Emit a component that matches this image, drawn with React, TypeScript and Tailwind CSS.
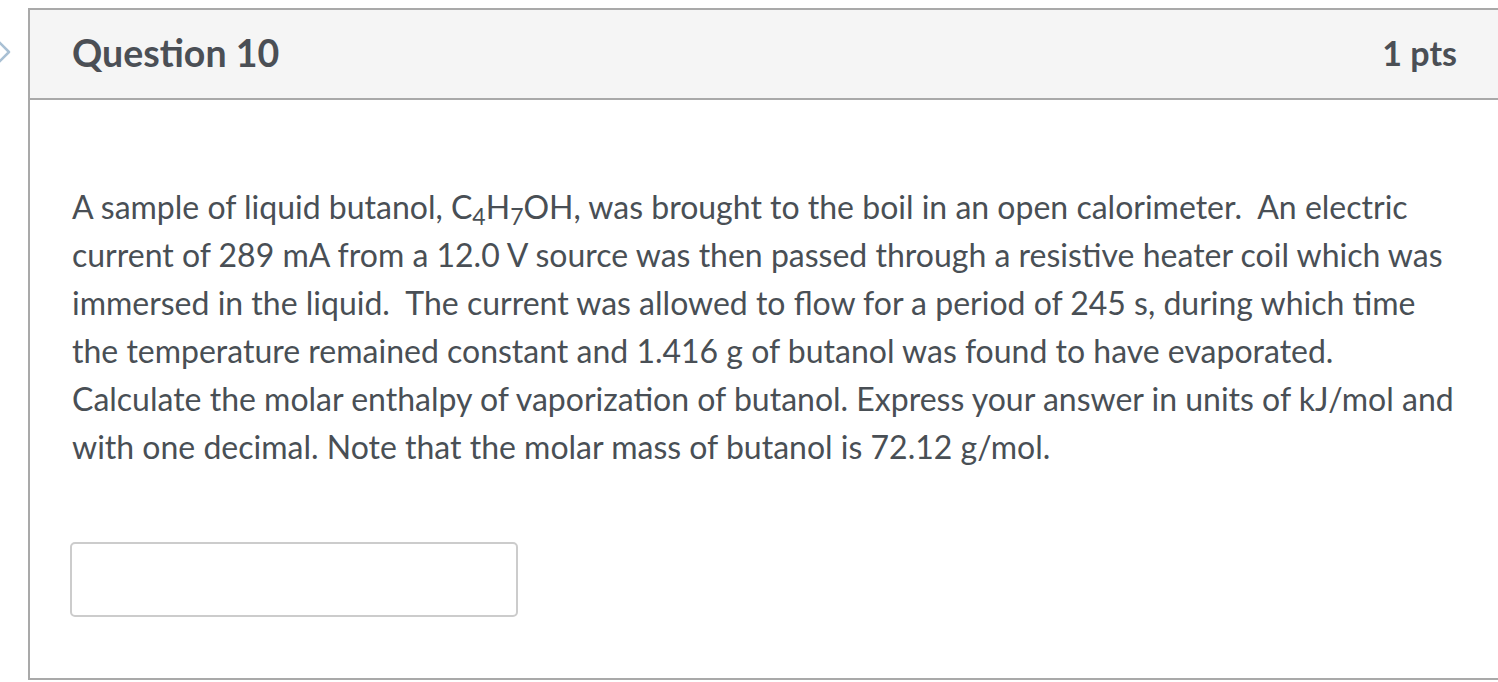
import React from "react";

export default function App() {
  return (
    <div className="relative w-[1498px] h-[682px] overflow-hidden bg-white font-['Lato','Liberation_Sans',sans-serif]">
      {/* collapsed nav chevron at the edge */}
      <svg className="absolute left-[-13px] top-[36px]" width="24" height="32" viewBox="0 0 24 32" fill="none">
        <path d="M8 2l14 14L8 30" stroke="#a9c0d4" strokeWidth="2.5" strokeLinecap="round" strokeLinejoin="round" />
      </svg>

      <div className="ml-[28px] mt-[8px] w-[1473px] h-[672px] border-2 border-[#a9a9a9] flex flex-col">
        {/* header */}
        <div className="h-[90px] shrink-0 bg-[#f5f5f5] border-b-2 border-[#a9a9a9] px-[42px] flex items-center justify-between text-[#4b4f55]">
          <h2 className="text-[37.5px] font-bold leading-none pb-[2px]">Question 10</h2>
          <div className="text-[34px] font-bold leading-none pb-[2px]">1 pts</div>
        </div>

        {/* body */}
        <div className="px-[42px] pt-[83px]">
          <p className="text-[32px] leading-[48px] text-[#494f55] pr-[2px]">
            A sample of liquid butanol, C<span className="text-[23px] leading-none relative top-[6px]">4</span>H
            <span className="text-[23px] leading-none relative top-[6px]">7</span>OH, was brought to the boil in an open
            calorimeter.{"\u00a0 "}An electric current of 289 mA from a 12.0 V source was then passed
            through a resistive heater coil which was immersed in the liquid.{"\u00a0 "}The current
            was allowed to flow for a period of 245 s, during which time the temperature remained
            constant and 1.416 g of butanol was found to have evaporated. Calculate the molar
            enthalpy of vaporization of butanol. Express your answer in units of kJ/mol and with one
            decimal. Note that the molar mass of butanol is 72.12 g/mol.
          </p>
          <div className="mt-[71px]">
            <input
              type="text"
              className="w-[448px] h-[75px] ml-[-2px] rounded-[5px] border-2 border-[#cccccc] bg-white outline-none"
            />
          </div>
        </div>
      </div>
    </div>
  );
}
